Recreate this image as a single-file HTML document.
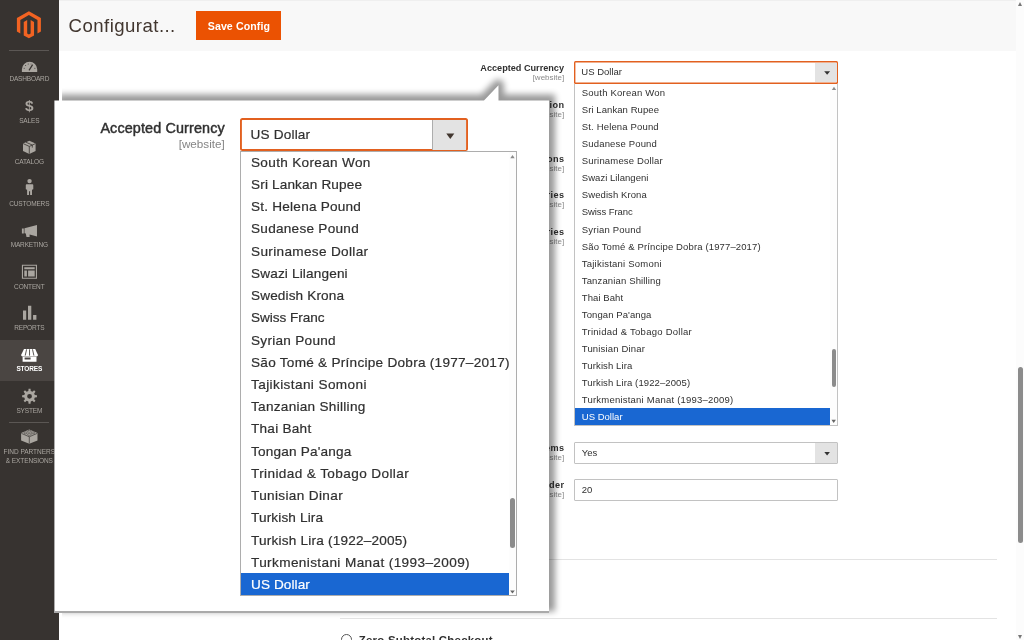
<!DOCTYPE html>
<html>
<head>
<meta charset="utf-8">
<title>Configuration</title>
<style>
*{box-sizing:border-box;margin:0;padding:0}
html,body{width:1024px;height:640px;overflow:hidden;background:#fff}
body{position:relative;font-family:"Liberation Sans",sans-serif;color:#303030}
.abs{position:absolute}
#all{position:absolute;left:0;top:0;width:1024px;height:640px;overflow:hidden;will-change:transform}
/* sidebar */
#side{position:absolute;left:0;top:0;width:58.6px;height:640px;background:#373330}
#side .sep{position:absolute;left:8.6px;width:40.2px;height:1px;background:#5b5754}
.mi{position:absolute;left:0;width:58.6px;height:41.5px}
.mi svg{position:absolute;display:block}
.mi .t{position:absolute;left:-20px;width:98.6px;text-align:center;font-size:6.5px;color:#aaa6a0;letter-spacing:-.15px;white-space:nowrap;line-height:8px}
.mi.act{background:#4a4542}
.mi.act .t{color:#fff;font-weight:bold}
/* header */
#hdr{position:absolute;left:58.6px;top:0;width:957.7px;height:51.4px;background:#f8f8f8;border-top:1px solid #efefef}
#title{position:absolute;left:68.6px;top:14px;font-size:18.6px;line-height:24px;color:#41362f;white-space:nowrap;letter-spacing:.45px}
#save{position:absolute;left:196.3px;top:10.8px;width:85.2px;height:29.6px;background:#eb5202;color:#fff;font-weight:bold;font-size:10.6px;line-height:31px;text-align:center;letter-spacing:.1px}
/* page scrollbar */
#sb{position:absolute;left:1016.3px;top:0;width:7.7px;height:640px;background:#fcfcfc}
#sb .th{position:absolute;left:1.5px;top:367px;width:5.2px;height:175.6px;border-radius:2.6px;background:#8c8c8c}
#sb .up{position:absolute;left:1.6px;top:2.2px;width:0;height:0;border-left:2.6px solid transparent;border-right:2.6px solid transparent;border-bottom:4.2px solid #777}
#sb .dn{position:absolute;left:1.6px;top:634.6px;width:0;height:0;border-left:2.6px solid transparent;border-right:2.6px solid transparent;border-top:4px solid #777}
/* right form */
.lab{position:absolute;right:460px;white-space:nowrap;text-align:right;font-weight:bold;font-size:9.15px;line-height:11px;color:#303030}
.sc{position:absolute;right:459.8px;white-space:nowrap;text-align:right;font-size:8px;line-height:10px;color:#8a8a8a}
.fld{position:absolute;left:574px;width:264.4px;height:21.6px;border:1px solid #c2c2c2;background:#fff;font-size:9.5px;line-height:19.6px;padding-left:6.8px;color:#303030;border-radius:1px}
.fld .btn{position:absolute;right:0;top:0;width:22.6px;height:19.6px;background:#e3e3e3}

.hr{position:absolute;height:1px;background:#e3e3e3}

/* right list */
#sel1{border:0;box-shadow:inset 0 0 0 1.4px #e2601f;border-radius:1.5px;line-height:21.8px;top:61.2px;height:22.6px;padding-left:7.3px}
#sel1 .btn{height:19.8px;width:22.4px;right:1.4px;top:1.4px}
#list1{position:absolute;left:574px;top:83.6px;width:264.4px;height:342px;border:1px solid #c2c2c2;border-top:0;background:#fff;overflow:hidden}
#list1 .o{position:absolute;left:0;width:256px;height:17.08px;line-height:17.08px;font-size:9.5px;letter-spacing:.15px;padding-left:6.8px;color:#303030;white-space:nowrap}
#list1 .o.s,#list2 .o.s{background:#1967d2;color:#fff}
.sbar{position:absolute;right:0;top:0;bottom:0;background:#fdfdfd}
.sbar .th{position:absolute;background:#8c8c8c}
.sbar .up,.sbar .dn{position:absolute;width:0;height:0}

/* popup */
#popw{position:absolute;left:0;top:0;width:1024px;height:640px}
#shw{position:absolute;left:0;top:0;width:1024px;height:640px;filter:blur(3.4px);opacity:.40;clip-path:inset(0 0 0 62px)}
#sh{position:absolute;left:0;top:0;width:1024px;height:640px;background:#000;
 clip-path:polygon(58px 94.4px,481.5px 94.4px,494.36px 81.2px,496.48px 79.8px,498.4px 79.5px,501.2px 80.2px,503.25px 82.3px,504px 85.1px,504px 94.4px,555.1px 94.4px,555.1px 611.5px,58px 611.5px)}
#shl{position:absolute;left:54.2px;top:611.2px;width:495.3px;height:1.4px;background:#aaa}
#pop{position:absolute;left:54.2px;top:84.6px;width:495.3px;height:526.6px;background:#fff;
 clip-path:polygon(0 15.9px,429.8px 15.9px,444.3px .7px,444.3px 15.9px,100% 15.9px,100% 100%,0 100%)}
#pop .bl{position:absolute;left:0;top:15.9px;bottom:0;width:1px;background:#c9c9c9}
#pop .bb{display:none}
#plab{position:absolute;right:324.7px;top:35.9px;font-weight:normal;-webkit-text-stroke:.45px #303030;letter-spacing:.12px;font-size:14.4px;line-height:16px;white-space:nowrap;color:#303030}
#psc{position:absolute;right:324.7px;top:52px;font-size:11.7px;line-height:14px;white-space:nowrap;color:#858585}
#psel{-webkit-text-stroke:.2px #303030;position:absolute;left:185.7px;top:33.7px;width:227.9px;height:33.2px;box-shadow:inset 0 0 0 1.9px #e2601f;border-radius:2.5px;background:#fff;font-size:13.6px;letter-spacing:.2px;line-height:34.8px;padding-left:10.5px;color:#303030;z-index:2}
#psel .btn{position:absolute;right:1.9px;top:1.9px;width:33.5px;height:29.4px;background:#e3e3e3;border-left:1px solid #adadad}
#list2{position:absolute;left:186px;top:66.2px;width:276.8px;height:445px;border:1px solid #adadad;background:#fff;overflow:hidden}
#list2 .o{z-index:1;-webkit-text-stroke:.2px currentColor;position:absolute;left:0;width:268px;height:22.22px;line-height:23.1px;font-size:13.6px;letter-spacing:.25px;padding-left:9.8px;color:#303030;white-space:nowrap}
</style>
</head>
<body>
<div id="all">
<div id="hdr"></div>
<div id="title">Configurat...</div>
<div id="save">Save Config</div>
<div id="sb"><div class="up"></div><div class="th"></div><div class="dn"></div></div>


<!-- right form -->
<div class="lab" style="top:62.6px">Accepted Currency</div><div class="sc" style="top:72.8px">[website]</div>
<div class="lab" style="top:99.8px;letter-spacing:.4px;right:459.6px">Payment Action</div><div class="sc" style="top:110px">[website]</div>
<div class="lab" style="top:153.5px;letter-spacing:.4px;right:459.6px">Credit Card Verifications</div><div class="sc" style="top:163.7px">[website]</div>
<div class="lab" style="top:189.8px;letter-spacing:.4px;right:459.6px">Payment from Applicable Countries</div><div class="sc" style="top:200px">[website]</div>
<div class="lab" style="top:226.8px;letter-spacing:.4px;right:459.6px">Payment from Specific Countries</div><div class="sc" style="top:237px">[website]</div>
<div class="lab" style="top:442.9px;letter-spacing:.4px;right:459.6px">Display Line Items</div><div class="sc" style="top:453.1px">[website]</div>
<div class="lab" style="top:479.6px;letter-spacing:.4px;right:459.6px">Sort Order</div><div class="sc" style="top:489.8px">[website]</div>
<div class="fld" id="sel1">US Dollar<div class="btn"></div></div>
<div id="list1"><div class="o" style="top:0.30px;letter-spacing:0.212px">South Korean Won</div><div class="o" style="top:17.38px;letter-spacing:0.075px">Sri Lankan Rupee</div><div class="o" style="top:34.46px;letter-spacing:0.156px">St. Helena Pound</div><div class="o" style="top:51.54px;letter-spacing:0.164px">Sudanese Pound</div><div class="o" style="top:68.62px;letter-spacing:0.174px">Surinamese Dollar</div><div class="o" style="top:85.70px;letter-spacing:0.043px">Swazi Lilangeni</div><div class="o" style="top:102.78px;letter-spacing:0.088px">Swedish Krona</div><div class="o" style="top:119.86px;letter-spacing:-0.077px">Swiss Franc</div><div class="o" style="top:136.94px;letter-spacing:0.200px">Syrian Pound</div><div class="o" style="top:154.02px;letter-spacing:0.131px">São Tomé &amp; Príncipe Dobra (1977–2017)</div><div class="o" style="top:171.10px;letter-spacing:0.217px">Tajikistani Somoni</div><div class="o" style="top:188.18px;letter-spacing:0.144px">Tanzanian Shilling</div><div class="o" style="top:205.26px;letter-spacing:0.083px">Thai Baht</div><div class="o" style="top:222.34px;letter-spacing:0.093px">Tongan Pa'anga</div><div class="o" style="top:239.42px;letter-spacing:0.258px">Trinidad &amp; Tobago Dollar</div><div class="o" style="top:256.50px;letter-spacing:0.171px">Tunisian Dinar</div><div class="o" style="top:273.58px;letter-spacing:0.108px">Turkish Lira</div><div class="o" style="top:290.66px;letter-spacing:0.108px">Turkish Lira (1922–2005)</div><div class="o" style="top:307.74px;letter-spacing:0.218px">Turkmenistani Manat (1993–2009)</div><div class="o s" style="top:324.82px;letter-spacing:0.017px">US Dollar</div><div class="sbar" style="width:7.4px"><div class="th" style="left:1.9px;top:265.5px;width:4.3px;height:37.5px;border-radius:2.1px"></div></div></div>
<div class="fld" style="top:442.2px">Yes<div class="btn"></div></div>
<div class="fld" style="top:479.2px">20</div>
<svg class="abs" style="left:0;top:0" width="1024" height="640" viewBox="0 0 1024 640">
<path d="M824.2 71.2H830.1L827.15 74.7Z" fill="#333"/>
<path d="M824.3 452H829.9L827.1 455.4Z" fill="#333"/>
<path d="M831.8 90H836.2L834 86.7Z" fill="#8c8c8c"/>
<path d="M831.5 419.7H835.9L833.7 423.1Z" fill="#666"/>
</svg>
<div class="hr" style="left:340px;top:558.6px;width:657px"></div>
<div class="hr" style="left:339.6px;top:618.4px;width:657.4px"></div>
<div class="abs" style="left:340.6px;top:634px;width:11.4px;height:11.4px;border:1px solid #555;border-radius:50%"></div>
<div class="abs" style="left:358.8px;top:633px;font-weight:bold;font-size:11.4px;line-height:14px;white-space:nowrap;color:#303030;letter-spacing:.25px">Zero Subtotal Checkout</div>

<div id="side">
<div class="mi act" style="top:339.7px;height:41px"></div>
<div class="sep" style="top:50px"></div>
<div class="sep" style="top:422.2px"></div>
<svg class="abs" style="left:0;top:0" width="58.6" height="640" viewBox="0 0 58.6 640">
 <!-- logo -->
 <g transform="translate(16.9,11.2) scale(1.155,1.129) translate(-1.609,0)" fill="#f26322">
  <path d="M12 24l-4.455-2.572v-12l2.97-1.715v12.001l1.485.857 1.485-.857V7.713l2.971 1.715v12L12 24zM22.391 6v12l-2.969 1.714V7.713L12 3.430 4.574 7.713v12.001L1.609 18V6L12 0l10.391 6z"/>
 </g>
 <g fill="#aaa6a0">
 <!-- dashboard -->
 <path d="M21.9 71.9 V69.3 A7.65 7.6 0 0 1 37.2 69.3 V71.9Z"/>
 <path d="M29 70.4 L32.6 64.6" stroke="#373330" stroke-width="1.2" fill="none"/>
 <g fill="#373330"><circle cx="24.2" cy="68.3" r=".5"/><circle cx="25.6" cy="65.5" r=".5"/><circle cx="28.2" cy="63.9" r=".5"/><circle cx="34.9" cy="68.3" r=".5"/><circle cx="31" cy="63.9" r=".45"/></g>
 <!-- sales -->
 <text x="29.2" y="111.3" font-family="Liberation Sans, sans-serif" font-weight="bold" font-size="15.4" text-anchor="middle">$</text>
 <!-- catalog -->
 <path d="M29.3 140.8 L35.6 143.4 V151 L29.3 154 L23 151 V143.4Z"/>
 <path d="M23.2 143.6 L29.3 146.4 L35.4 143.6 M29.3 146.4 V153.8" stroke="#373330" stroke-width=".8" fill="none"/>
 <path d="M26 142.2 L32.3 145 V147.6" stroke="#373330" stroke-width=".8" fill="none"/>
 <!-- customers -->
 <circle cx="29.55" cy="181.1" r="2.2"/>
 <path d="M26.6 184.2 H32.5 Q33.3 184.2 33.3 185.2 V189.2 L32 189.8 V195 H30.1 V191.3 H29 V195 H27.1 V189.8 L25.8 189.2 V185.2 Q25.8 184.2 26.6 184.2Z"/>
 <!-- marketing -->
 <path d="M21.9 228.6 H23.8 V233.4 H21.9Z M24.5 228.3 L37 225 V236.4 L29.6 234.4 V236.9 H26.5 L25.8 233.6 L24.5 233.2Z"/>
 <!-- content -->
 <path d="M21.9 264.7 H37 V278.75 H21.9Z M23 265.8 V277.65 H35.9 V265.8Z" fill-rule="evenodd"/>
 <path d="M24.3 267.2 H34.7 V269.3 H24.3Z M24.3 270.5 H26.9 V276.4 H24.3Z M28.1 270.5 H34.7 V276.4 H28.1Z"/>
 <!-- reports -->
 <path d="M23 310.4 H26.2 V319.8 H23Z M28 305.8 H31.3 V319.8 H28Z M33.1 314.9 H36.4 V319.8 H33.1Z"/>
 <!-- system -->
 <path fill-rule="evenodd" d="M28.55 388.87 L30.55 388.87 L30.73 391.03 L32.44 391.74 L34.10 390.34 L35.51 391.75 L34.11 393.41 L34.82 395.12 L36.98 395.30 L36.98 397.30 L34.82 397.48 L34.11 399.19 L35.51 400.85 L34.10 402.26 L32.44 400.86 L30.73 401.57 L30.55 403.73 L28.55 403.73 L28.37 401.57 L26.66 400.86 L25.00 402.26 L23.59 400.85 L24.99 399.19 L24.28 397.48 L22.12 397.30 L22.12 395.30 L24.28 395.12 L24.99 393.41 L23.59 391.75 L25.00 390.34 L26.66 391.74 L28.37 391.03Z M27.15 396.30 a2.40 2.40 0 1 0 4.80 0 a2.40 2.40 0 1 0 -4.80 0Z"/>
 <!-- partners -->
 <path d="M29.3 429.6 L37.5 433 V440.4 L29.3 443.8 L21.1 440.4 V433Z"/>
 <path d="M21.4 433.4 L29.3 436.8 L37.2 433.4 M29.3 436.8 V443.6" stroke="#373330" stroke-width=".7" fill="none"/>
 <g fill="#aaa6a0" stroke="#373330" stroke-width=".5"><ellipse cx="29.3" cy="431.3" rx="1.8" ry=".9"/><ellipse cx="25.6" cy="432.9" rx="1.8" ry=".9"/><ellipse cx="33" cy="432.9" rx="1.8" ry=".9"/><ellipse cx="29.3" cy="434.5" rx="1.8" ry=".9"/></g>
 </g>
 <!-- stores (active, white) -->
 <g fill="#fff">
 <path d="M24 349 H35.2 L38 355 Q38 356.4 36.6 356.4 H22.5 Q21.1 356.4 21.1 355Z"/>
 <path d="M26.6 349.3 L25.2 355.6 M29.55 349.3 V355.6 M32.5 349.3 L33.9 355.6" stroke="#4a4542" stroke-width=".9" fill="none"/>
 <path fill-rule="evenodd" d="M22.6 356.8 H36.5 V361.7 H22.6Z M24.6 357.6 V359.6 H30.6 V357.6Z"/>
 </g>
</svg>
<div class="mi" style="top:50px"><div class="t" style="top:25.4px">DASHBOARD</div></div>
<div class="mi" style="top:91.4px"><div class="t" style="top:25.5px">SALES</div></div>
<div class="mi" style="top:132.8px"><div class="t" style="top:25.4px">CATALOG</div></div>
<div class="mi" style="top:174.2px"><div class="t" style="top:25.4px">CUSTOMERS</div></div>
<div class="mi" style="top:215.6px"><div class="t" style="top:25.2px">MARKETING</div></div>
<div class="mi" style="top:257px"><div class="t" style="top:25.6px">CONTENT</div></div>
<div class="mi" style="top:298.4px"><div class="t" style="top:25.4px">REPORTS</div></div>
<div class="mi" style="top:339.8px"><div class="t" style="top:25.3px;color:#fff;font-weight:bold">STORES</div></div>
<div class="mi" style="top:381.2px"><div class="t" style="top:25.6px">SYSTEM</div></div>
<div class="mi" style="top:422.6px"><div class="t" style="top:25px;letter-spacing:-.03px">FIND PARTNERS</div><div class="t" style="top:34.4px;letter-spacing:-.08px">&amp; EXTENSIONS</div></div>
</div>

<!-- popup -->
<div id="popw"><div id="shw"><div id="sh"></div></div><div id="shl"></div><div id="pop"><div class="bl"></div><div class="bb"></div>
<div id="plab">Accepted Currency</div><div id="psc">[website]</div>
<div id="psel">US Dollar<div class="btn"></div></div>
<div id="list2"><div class="o" style="top:-1.00px;letter-spacing:0.319px">South Korean Won</div><div class="o" style="top:21.22px;letter-spacing:0.150px">Sri Lankan Rupee</div><div class="o" style="top:43.44px;letter-spacing:0.225px">St. Helena Pound</div><div class="o" style="top:65.66px;letter-spacing:0.264px">Sudanese Pound</div><div class="o" style="top:87.88px;letter-spacing:0.332px">Surinamese Dollar</div><div class="o" style="top:110.10px;letter-spacing:0.157px">Swazi Lilangeni</div><div class="o" style="top:132.32px;letter-spacing:0.135px">Swedish Krona</div><div class="o" style="top:154.54px;letter-spacing:-0.050px">Swiss Franc</div><div class="o" style="top:176.76px;letter-spacing:0.275px">Syrian Pound</div><div class="o" style="top:198.98px;letter-spacing:0.261px">São Tomé &amp; Príncipe Dobra (1977–2017)</div><div class="o" style="top:221.20px;letter-spacing:0.394px">Tajikistani Somoni</div><div class="o" style="top:243.42px;letter-spacing:0.278px">Tanzanian Shilling</div><div class="o" style="top:265.64px;letter-spacing:0.250px">Thai Baht</div><div class="o" style="top:287.86px;letter-spacing:0.186px">Tongan Pa'anga</div><div class="o" style="top:310.08px;letter-spacing:0.383px">Trinidad &amp; Tobago Dollar</div><div class="o" style="top:332.30px;letter-spacing:0.350px">Tunisian Dinar</div><div class="o" style="top:354.52px;letter-spacing:0.142px">Turkish Lira</div><div class="o" style="top:376.74px;letter-spacing:0.208px">Turkish Lira (1922–2005)</div><div class="o" style="top:398.96px;letter-spacing:0.379px">Turkmenistani Manat (1993–2009)</div><div class="o s" style="top:421.18px;letter-spacing:0.094px">US Dollar</div><div class="sbar" style="width:6.8px"><div class="th" style="left:.5px;top:346.5px;width:5px;height:50px;border-radius:2.5px"></div></div></div>
<svg class="abs" style="left:0;top:0;z-index:3" width="495.3" height="526.6" viewBox="0 0 495.3 526.6"><polygon points="392.30,48.50 400.30,48.50 396.30,54.10" fill="#41362f"/><polygon points="456.30,73.20 460.70,73.20 458.50,70.10" fill="#8c8c8c"/><polygon points="456.10,505.40 460.80,505.40 458.45,508.60" fill="#666"/></svg></div></div>
</div>
</body>
</html>
